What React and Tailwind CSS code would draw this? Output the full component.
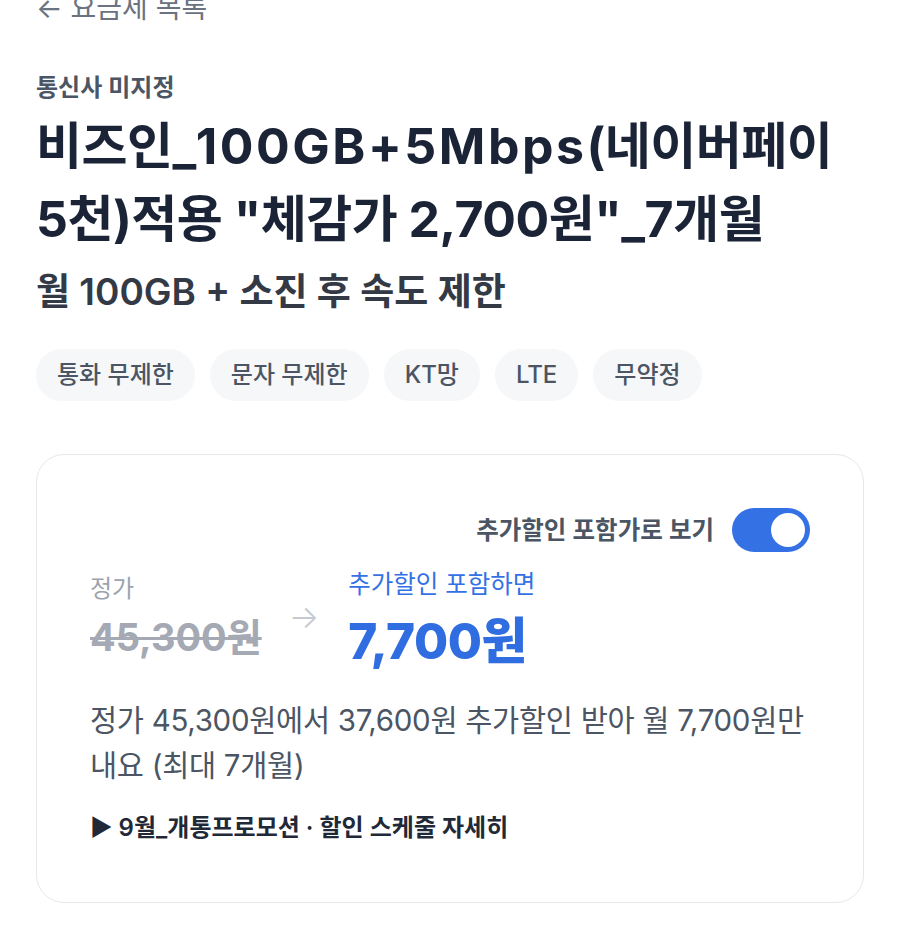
import React, { useState } from 'react';

const chips = ['통화 무제한', '문자 무제한', 'KT망', 'LTE', '무약정'];

export default function App() {
  const [includeDiscount, setIncludeDiscount] = useState(true);

  return (
    <div
      className="min-h-screen w-[900px] overflow-hidden bg-white px-9"
      style={{ fontFamily: 'Inter, "Noto Sans CJK KR", sans-serif' }}
    >
      {/* Back link */}
      <div className="-mt-[12px] text-[28px] leading-[40px] text-[#6b7280]">← 요금제 목록</div>

      {/* Carrier */}
      <div className="mt-[43px] text-[24px] font-semibold leading-[34px] text-[#4b5563]">통신사 미지정</div>

      {/* Title */}
      <h1 className="mt-[5px] whitespace-nowrap text-[50px] font-bold leading-[73px] tracking-[-0.5px] text-[#1b2436]">
        비즈인_<span className="tracking-[2.5px]">100GB+5Mbps</span>(네이버페이
        <br />
        5천)적용 "체감가 2,700원"_7개월
      </h1>

      <p className="mt-[12px] text-[37px] font-semibold leading-[48px] text-[#333a46]">
        월 100GB + 소진 후 속도 제한
      </p>

      {/* Chips */}
      <div className="mt-[33px] flex gap-[15px]">
        {chips.map((c) => (
          <span
            key={c}
            className="flex h-[52px] items-center rounded-full bg-[#f6f7f9] px-[21px] text-[24px] font-medium text-[#4b5563]"
          >
            {c}
          </span>
        ))}
      </div>

      {/* Price card */}
      <div className="mt-[53px] w-[828px] rounded-[28px] border border-[#e5e7eb] px-[53px] pt-[53px] pb-[57px]">
        <div className="flex items-center justify-end gap-[18px]">
          <span className="text-[24.5px] font-semibold text-[#4b5563]">추가할인 포함가로 보기</span>
          <button
            onClick={() => setIncludeDiscount(!includeDiscount)}
            className={`flex h-[44px] w-[78px] items-center rounded-full p-[5px] ${
              includeDiscount ? 'justify-end bg-[#3471e4]' : 'justify-start bg-[#d1d5db]'
            }`}
          >
            <span className="h-[34px] w-[34px] rounded-full bg-white" />
          </button>
        </div>

        <div className="mt-[15px] flex items-start">
          <div className="mt-[5px] flex flex-col">
            <span className="text-[24px] leading-[34px] text-[#9ca3af]">정가</span>
            <span className="mt-[7px] text-[38px] font-bold leading-[48px] text-[#a5a9b3] line-through decoration-[3px]">
              45,300원
            </span>
          </div>
          <span className="ml-[27px] mt-[30px] text-[32px] font-light leading-[40px] text-[#c5c9d0]">→</span>
          <div className="ml-[29px] flex flex-col">
            <span className="text-[24.5px] leading-[34px] text-[#3471e4]">추가할인 포함하면</span>
            <span className="mt-[10px] text-[49.5px] font-extrabold leading-[60px] tracking-[-0.5px] text-[#2f6de0]">
              7,700원
            </span>
          </div>
        </div>

        <p className="mt-[27px] whitespace-nowrap text-[29.5px] leading-[45px] tracking-[-0.3px] text-[#4b5563]">
          정가 45,300원에서 37,600원 추가할인 받아 월 7,700원만
          <br />
          내요 (최대 7개월)
        </p>

        <div className="mt-[23px] text-[24px] font-semibold leading-[34px] text-[#1f2937]">
          ▶ 9월_개통프로모션 · 할인 스케줄 자세히
        </div>
      </div>
    </div>
  );
}
